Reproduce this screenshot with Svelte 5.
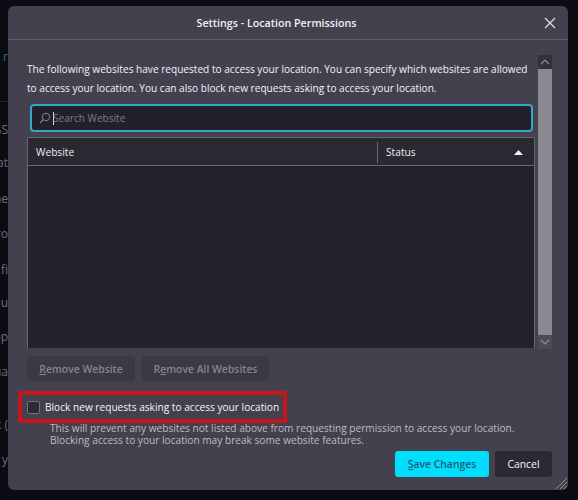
<script>
  const behind = [
    ['r', 50, '#2c6f8c'], ['SS', 123, '#6f6e77'], ['at', 156, '#6f6e77'], ['he', 192, '#6f6e77'],
    ['ro', 227, '#6f6e77'], ['fi', 263, '#6f6e77'], ['au', 296, '#6f6e77'], ['op', 330, '#6f6e77'],
    ['ua', 365, '#6f6e77'], ['k (', 418, '#6f6e77'], ['e y', 453, '#6f6e77']
  ];
</script>

<div class="page">
  {#each behind as [t, y, c]}
    <span class="behind" style="top:{y}px;color:{c}">{t}</span>
  {/each}
  <i class="rule"></i>

  <div class="dialog">
    <header class="head">
      <h1>Settings - Location Permissions</h1>
      <button class="close" aria-label="Close">
        <svg width="12" height="12" viewBox="0 0 12 12"><path d="M1 1l10 10M11 1L1 11" stroke="#e6e6ea" stroke-width="1.1" fill="none" /></svg>
      </button>
    </header>

    <div class="content">
      <div class="main">
        <p class="intro">The following websites have requested to access your location. You can specify which websites are allowed to access your location. You can also block new requests asking to access your location.</p>

        <div class="search">
          <svg width="12" height="12" viewBox="0 0 12 12"><circle cx="7" cy="5" r="3.7" stroke="#85848c" stroke-width="1" fill="none" /><path d="M4.3 7.7L1 11" stroke="#85848c" stroke-width="1.1" fill="none" /></svg>
          <i class="caret"></i>
          <span>Search Website</span>
        </div>

        <div class="table">
          <div class="thead">
            <div class="cw">Website</div>
            <div class="cs">Status
              <svg width="9" height="5" viewBox="0 0 9 5"><path d="M4.5 0L9 5H0z" fill="#f2f2f4" /></svg>
            </div>
          </div>
          <div class="tbody"></div>
        </div>

        <div class="actions">
          <button class="ghost one"><u>R</u>emove Website</button>
          <button class="ghost two">R<u>e</u>move All Websites</button>
        </div>
      </div>

      <div class="scrollbar">
        <div class="arrow">
          <svg width="10" height="6" viewBox="0 0 10 6"><path d="M1 5l4-4 4 4" stroke="#8f8e96" stroke-width="1.1" fill="none" /></svg>
        </div>
        <div class="thumb"></div>
        <div class="arrow low">
          <svg width="10" height="6" viewBox="0 0 10 6"><path d="M1 1l4 4 4-4" stroke="#8f8e96" stroke-width="1.1" fill="none" /></svg>
        </div>
      </div>
    </div>

    <div class="block">
      <label class="check"><i class="box"></i><span>Block new requests asking to access your location</span></label>
      <p class="note">This will prevent any websites not listed above from requesting permission to access your location.<br />Blocking access to your location may break some website features.</p>
    </div>

    <footer class="foot">
      <button class="save"><u>S</u>ave Changes</button>
      <button class="cancel">Cancel</button>
    </footer>

    <svg class="grip" width="14" height="14" viewBox="0 0 14 14"><path d="M13 2L2 13M13 6L6 13M13 10l-3 3" stroke="#8c8b93" stroke-width="1" fill="none" /></svg>
  </div>
</div>

<style>
  :global(body) { margin: 0; background: #0b0b12; }
  .page {
    position: relative;
    width: 578px;
    height: 500px;
    overflow: hidden;
    background: #0b0b12;
    font-family: "Open Sans", "Liberation Sans", sans-serif;
    padding: 6px 10px 10px 8px;
    box-sizing: border-box;
  }
  .behind { position: absolute; left: 0; width: 8px; display: flex; justify-content: flex-end; overflow: hidden; font-size: 12px; line-height: 14px; white-space: nowrap; }
  .rule { position: absolute; left: 0; top: 101px; width: 8px; height: 1px; background: #24242b; }
  .dialog {
    position: relative;
    height: 484px;
    background: #42414d;
    border-radius: 6px;
    display: flex;
    flex-direction: column;
    color: #fbfbfe;
  }
  .head {
    height: 33px;
    border-bottom: 1px solid #5f5e69;
    display: flex;
    align-items: center;
    justify-content: center;
    position: relative;
    flex: none;
    padding-right: 23px;
  }
  h1 { margin: 0; font-size: 10.7px; font-weight: 600; color: #f1f1f4; }
  .close { position: absolute; right: 12px; top: 11px; width: 12px; height: 12px; padding: 0; border: 0; background: none; display: flex; }
  .content { display: flex; padding: 15px 16px 0 19px; height: 342px; box-sizing: border-box; flex: none; gap: 3px; }
  .main { flex: 1; min-width: 0; }
  .intro { margin: 0; font-size: 10.1px; line-height: 19px; color: #f3f3f6; height: 49px; padding-top: 5px; box-sizing: border-box; }
  .search {
    height: 28px;
    box-sizing: border-box;
    margin: 0 2px 0 3px;
    border: 2px solid #35a6c4;
    border-radius: 4px;
    background: #22212b;
    display: flex;
    align-items: center;
    padding-left: 7px;
    font-size: 10.1px;
    color: #7d7c85;
  }
  .caret { width: 1px; height: 13px; background: #d8d8dc; margin: 0 -1px 0 2px; }
  .table { margin-top: 5px; border: 1px solid #6a6973; border-bottom: 0; background: #23222b; height: 211px; box-sizing: border-box; display: flex; flex-direction: column; border-radius: 2px 2px 0 0; }
  .thead { height: 28px; box-sizing: border-box; padding-top: 1px; background: #2a2932; border-bottom: 1px solid #6a6973; display: flex; align-items: center; font-size: 10.2px; color: #eeeef1; flex: none; }
  .cw { width: 349px; padding-left: 8px; box-sizing: border-box; }
  .cs { flex: 1; height: 21px; border-left: 1px solid #6a6973; padding: 0 11px 0 8px; display: flex; align-items: center; justify-content: space-between; }
  .tbody { flex: 1; }
  .actions { display: flex; gap: 7px; margin-top: 8px; }
  .ghost { height: 25px; border: 0; border-radius: 3px; background: #3a3944; color: #86858d; font: inherit; font-size: 10.4px; font-weight: 600; padding: 0; }
  .one { width: 108px; }
  .two { width: 127px; }
  .scrollbar { width: 14px; display: flex; flex-direction: column; height: 294px; flex: none; background: #8a8991; }
  .arrow { height: 14px; background: #33323c; display: flex; align-items: center; justify-content: center; flex: none; }
  .arrow.low { background: #4c4b56; }
  .thumb { flex: 1; }
  .block { margin-top: 9px; flex: none; }
  .check {
    display: flex;
    align-items: center;
    gap: 5px;
    margin-left: 10px;
    width: 269px;
    height: 32px;
    border: 4px solid #c4161c;
    box-sizing: border-box;
    padding-left: 5px;
    font-size: 10.15px;
    color: #f5f5f7;
    white-space: nowrap;
  }
  .box { width: 13px; height: 13px; box-sizing: border-box; background: #2b2a35; border: 1px solid #75747d; border-radius: 2px; flex: none; }
  .note { margin: -1px 0 0 42px; font-size: 10.15px; line-height: 12px; color: #bdbcc3; white-space: nowrap; }
  .foot { display: flex; justify-content: flex-end; gap: 6px; padding: 0 16px 0 0; margin-top: 5px; }
  button { font-family: inherit; }
  .save { width: 94px; height: 26px; border: 0; border-radius: 3px; background: #00ddff; color: #15616f; font-size: 10.4px; font-weight: 600; padding: 0; }
  .cancel { width: 57px; height: 26px; border: 0; border-radius: 3px; background: #2b2a33; color: #f5f5f7; font-size: 10.4px; font-weight: 500; padding: 0; }
  .grip { position: absolute; right: 0; bottom: 0; }
</style>
